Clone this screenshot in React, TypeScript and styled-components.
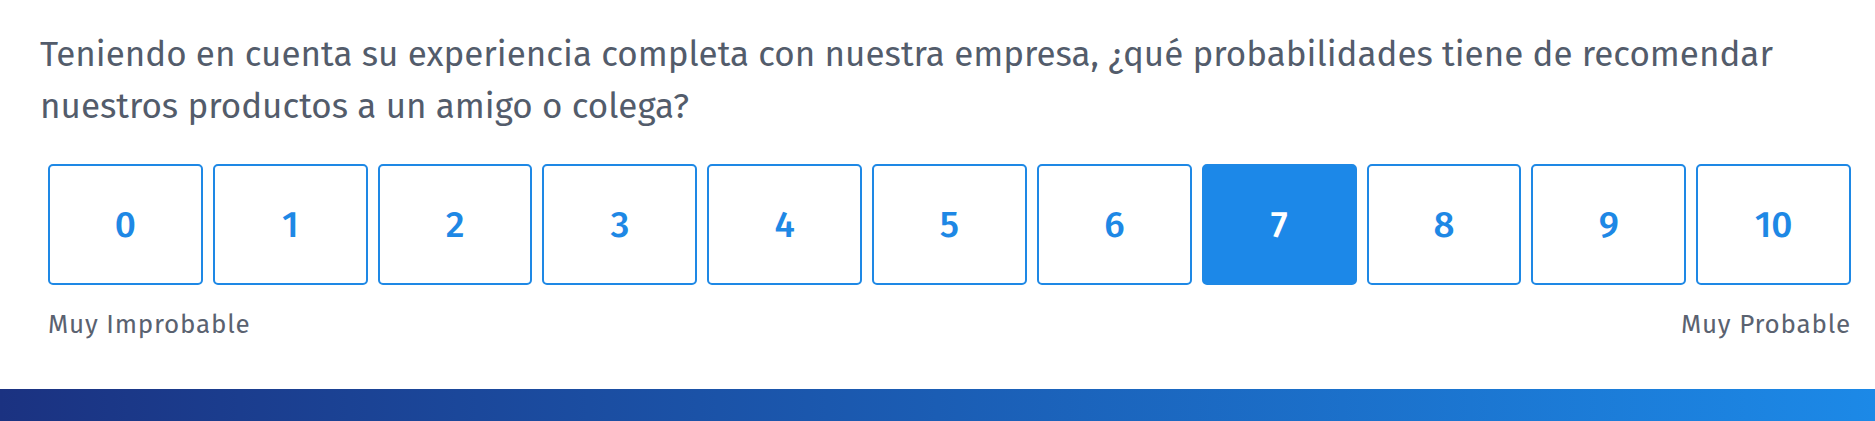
import React, { useState } from "react";
import styled, { createGlobalStyle } from "styled-components";

const GlobalStyle = createGlobalStyle`
  html, body {
    margin: 0;
    padding: 0;
    background: #ffffff;
  }
  body {
    font-family: "Fira Sans", "Noto Sans", "Open Sans", sans-serif;
  }
`;

const Page = styled.div`
  display: flex;
  flex-direction: column;
  width: 100%;
  min-height: 421px;
  background: #ffffff;
`;

const Survey = styled.section`
  display: flex;
  flex-direction: column;
  padding: 28px 16px 0 40px;
`;

const Question = styled.p`
  margin: 0;
  max-width: 1770px;
  font-family: "Fira Sans", "Noto Sans", sans-serif;
  font-size: 35px;
  line-height: 52px;
  font-weight: 400;
  color: #535c6b;
`;

const Scale = styled.div`
  display: flex;
  flex-direction: column;
  padding: 0 8px;
  margin-top: 32px;
`;

const Options = styled.div`
  display: grid;
  grid-template-columns: repeat(11, 1fr);
  gap: 10px;
`;

const Option = styled.button<{ $selected: boolean }>`
  display: flex;
  align-items: center;
  justify-content: center;
  height: 121px;
  margin: 0;
  padding: 0;
  border: 2px solid #1e88e5;
  border-radius: 5px;
  background: ${(p) => (p.$selected ? "#1c88e8" : "#ffffff")};
  color: ${(p) => (p.$selected ? "#ffffff" : "#1e88e5")};
  font-family: "Fira Sans", "Noto Sans", sans-serif;
  font-size: 37px;
  font-weight: 500;
  cursor: pointer;
`;

const Labels = styled.div`
  display: flex;
  justify-content: space-between;
  margin-top: 24px;
  font-family: "Fira Sans", "Noto Sans", sans-serif;
  font-size: 26px;
  line-height: 32px;
  letter-spacing: 0.8px;
  color: #5a6270;
`;

const GradientBar = styled.div`
  height: 32px;
  margin-top: 48px;
  background: linear-gradient(90deg, #1b3281 0%, #1b5db4 50%, #1c89e7 100%);
`;

export default function App() {
  const [score, setScore] = useState<number>(7);
  const values = Array.from({ length: 11 }, (_, i) => i);

  return (
    <>
      <GlobalStyle />
      <Page>
        <Survey>
          <Question>
            Teniendo en cuenta su experiencia completa con nuestra empresa, ¿qué
            probabilidades tiene de recomendar nuestros productos a un amigo o
            colega?
          </Question>
          <Scale>
            <Options>
              {values.map((v) => (
                <Option key={v} $selected={v === score} onClick={() => setScore(v)}>
                  {v}
                </Option>
              ))}
            </Options>
            <Labels>
              <span>Muy Improbable</span>
              <span>Muy Probable</span>
            </Labels>
          </Scale>
        </Survey>
        <GradientBar />
      </Page>
    </>
  );
}
